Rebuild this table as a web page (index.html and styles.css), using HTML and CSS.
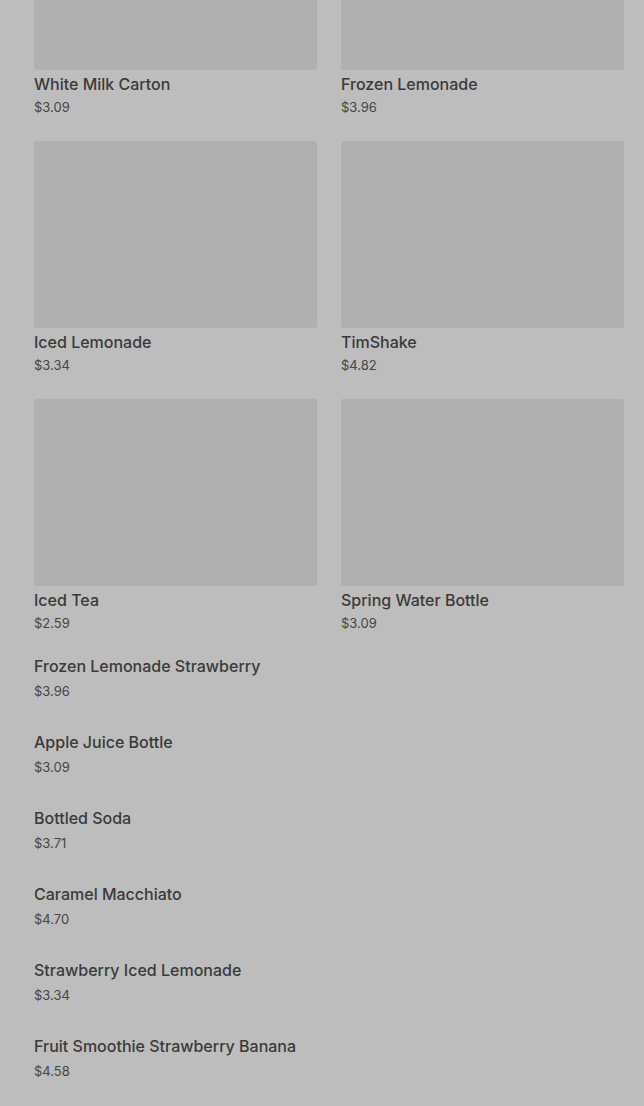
FILE: index.html
```html
<!DOCTYPE html>
<html lang="en">
<head>
  <meta charset="UTF-8"/>
  <meta name="viewport" content="width=device-width, initial-scale=1.0"/>
  <title>Menu - Drinks</title>
  <link rel="stylesheet" href="styles.css">
</head>
<body>
  <div class="page">
    <div class="grid">
      <div class="card">
        <div class="thumb"></div>
        <h3 class="name">White Milk Carton</h3>
        <p class="price">$3.09</p>
      </div>
      <div class="card">
        <div class="thumb"></div>
        <h3 class="name">Frozen Lemonade</h3>
        <p class="price">$3.96</p>
      </div>
      <div class="card">
        <div class="thumb"></div>
        <h3 class="name">Iced Lemonade</h3>
        <p class="price">$3.34</p>
      </div>
      <div class="card">
        <div class="thumb"></div>
        <h3 class="name">TimShake</h3>
        <p class="price">$4.82</p>
      </div>
      <div class="card">
        <div class="thumb"></div>
        <h3 class="name">Iced Tea</h3>
        <p class="price">$2.59</p>
      </div>
      <div class="card">
        <div class="thumb"></div>
        <h3 class="name">Spring Water Bottle</h3>
        <p class="price">$3.09</p>
      </div>
    </div>

    <ul class="list">
      <li class="item">
        <h3 class="name">Frozen Lemonade Strawberry</h3>
        <p class="price">$3.96</p>
      </li>
      <li class="item">
        <h3 class="name">Apple Juice Bottle</h3>
        <p class="price">$3.09</p>
      </li>
      <li class="item">
        <h3 class="name">Bottled Soda</h3>
        <p class="price">$3.71</p>
      </li>
      <li class="item">
        <h3 class="name">Caramel Macchiato</h3>
        <p class="price">$4.70</p>
      </li>
      <li class="item">
        <h3 class="name">Strawberry Iced Lemonade</h3>
        <p class="price">$3.34</p>
      </li>
      <li class="item">
        <h3 class="name">Fruit Smoothie Strawberry Banana</h3>
        <p class="price">$4.58</p>
      </li>
    </ul>
  </div>
</body>
</html>
```

FILE: styles.css
```css
body {
  margin: 0;
  padding: 0;
  background-color: #bdbdbd;
  font-family: Inter, 'Noto Sans', sans-serif;
  color: #3b3b3b;
  overflow: hidden;
}

/* page is scrolled part way down the menu */
.page {
  margin-top: -117px;
  padding: 0 20px 0 34px;
}

.grid {
  display: grid;
  grid-template-columns: 1fr 1fr;
  column-gap: 24px;
  row-gap: 23px;
}

.thumb {
  height: 187px;
  background-color: #b0b0b0;
  border-radius: 2px;
}

.name {
  margin: 3px 0 0;
  font-size: 16px;
  line-height: 22px;
  font-weight: 500;
  color: #3a3a3a;
}

.price {
  margin: 0;
  font-size: 13px;
  line-height: 22px;
  color: #454545;
}

.card .price {
  margin-top: 1px;
}

.list {
  list-style: none;
  margin: 21px 0 0;
  padding: 0;
}

.item {
  padding-bottom: 29px;
}

.item .name {
  margin: 0 0 3px;
}
```
